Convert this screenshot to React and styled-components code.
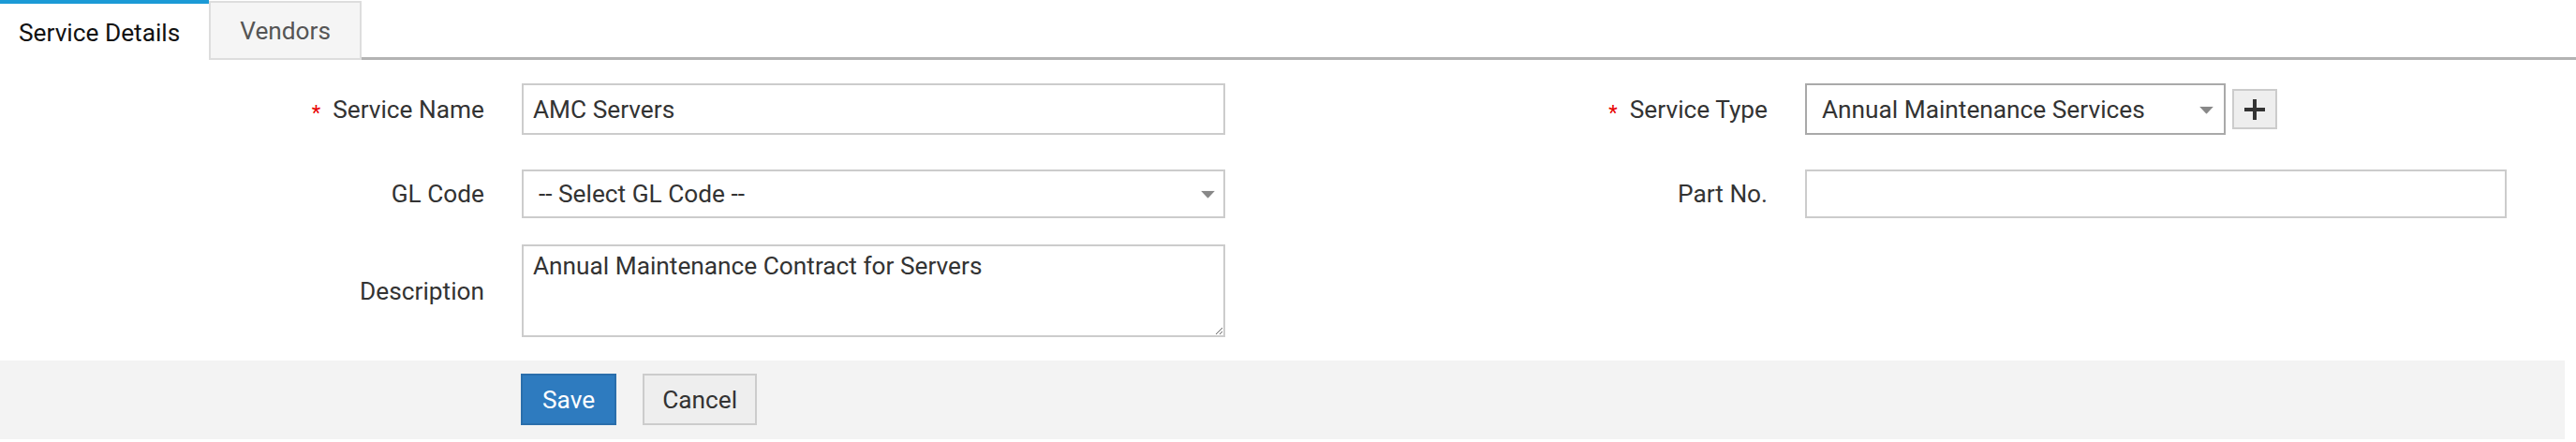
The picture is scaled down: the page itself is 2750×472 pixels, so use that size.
import React from 'react';
import styled, { createGlobalStyle } from 'styled-components';

const GlobalStyle = createGlobalStyle`
  body {
    margin: 0;
    background: #fff;
    font-family: Roboto, "Noto Sans", Arial, sans-serif;
  }
`;

const App = () => {
  return (
    <Page>
      <GlobalStyle />
      <TabBar>
        <Tab $active>Service Details</Tab>
        <Tab>Vendors</Tab>
      </TabBar>

      <Form>
        <FormRow $top={25}>
          <Label>
            <Required>*</Required>Service Name
          </Label>
          <TextInput $h={55} defaultValue="AMC Servers" />
          <Label>
            <Required>*</Required>Service Type
          </Label>
          <Control>
            <SelectWrap $w={449}>
              <Select $h={55} $dark defaultValue="ams">
                <option value="ams">Annual Maintenance Services</option>
              </Select>
              <Arrow />
            </SelectWrap>
            <AddButton type="button" title="Add">
              <svg width="24" height="24" viewBox="0 0 24 24">
                <path d="M12 1v22M1 12h22" stroke="#333" strokeWidth="4" fill="none" />
              </svg>
            </AddButton>
          </Control>
        </FormRow>

        <FormRow $top={37}>
          <Label>GL Code</Label>
          <SelectWrap>
            <Select $h={52} defaultValue="">
              <option value="">-- Select GL Code --</option>
            </Select>
            <Arrow $right={11} />
          </SelectWrap>
          <Label>Part No.</Label>
          <TextInput $h={52} defaultValue="" />
        </FormRow>

        <FormRow $top={28}>
          <Label>Description</Label>
          <TextArea defaultValue="Annual Maintenance Contract for Servers" />
        </FormRow>
      </Form>

      <Footer>
        <Button $primary $pad={21}>Save</Button>
        <Button $pad={19}>Cancel</Button>
      </Footer>
    </Page>
  );
};

const Arrow = ({ $right = 13 }) => (
  <ArrowIcon $right={$right} width="15" height="8" viewBox="0 0 15 8">
    <polygon points="0,0 15,0 7.5,8" fill="#888" />
  </ArrowIcon>
);

export default App;

const Page = styled.div`
  width: 2750px;
  color: #333;
`;

const TabBar = styled.div`
  display: flex;
  align-items: flex-start;
  height: 61px;
  border-bottom: 3px solid #b3b3b3;
`;

const Tab = styled.div`
  box-sizing: border-box;
  height: ${props => (props.$active ? '64px' : '63px')};
  margin-top: ${props => (props.$active ? '0' : '1px')};
  font-size: 26.25px;
  line-height: 30px;
  white-space: nowrap;
  cursor: pointer;
  background: ${props => (props.$active ? '#fff' : '#f5f5f5')};
  color: ${props => (props.$active ? '#111' : '#555')};
  border: ${props => (props.$active ? 'none' : '2px solid #ddd')};
  border-top: ${props => (props.$active ? '4px solid #1b9ad6' : '2px solid #ddd')};
  padding: ${props => (props.$active ? '16px 31px 14px 20px' : '15px 31px 12px 31px')};
`;

const Form = styled.div`
  padding-bottom: 25px;
`;

const FormRow = styled.div`
  display: grid;
  grid-template-columns: 517px 751px 539px 749px;
  column-gap: 40px;
  align-items: center;
  margin-top: ${props => props.$top}px;
`;

const Label = styled.label`
  display: flex;
  justify-content: flex-end;
  align-items: center;
  font-size: 26.25px;
  color: #333;
  white-space: nowrap;
`;

const Required = styled.span`
  color: #e80000;
  font-size: 22px;
  margin-right: 13px;
  transform: translateY(4px);
`;

const TextInput = styled.input`
  box-sizing: border-box;
  width: 100%;
  height: ${props => props.$h}px;
  border: 2px solid #ccc;
  padding: 0 10px;
  font: inherit;
  font-size: 26.25px;
  color: #333;
  outline: none;
`;

const Control = styled.div`
  display: flex;
  align-items: center;
  gap: 7px;
`;

const SelectWrap = styled.div`
  position: relative;
  width: ${props => (props.$w ? `${props.$w}px` : '100%')};
`;

const Select = styled.select`
  box-sizing: border-box;
  appearance: none;
  width: 100%;
  height: ${props => props.$h}px;
  border: 2px solid ${props => (props.$dark ? '#a9a9a9' : '#ccc')};
  border-radius: 0;
  background: #fff;
  padding: 0 40px 0 16px;
  font: inherit;
  font-size: 26.25px;
  color: #333;
  outline: none;
`;

const ArrowIcon = styled.svg`
  position: absolute;
  right: ${props => props.$right}px;
  top: 50%;
  transform: translateY(-40%);
  pointer-events: none;
`;

const AddButton = styled.button`
  box-sizing: border-box;
  width: 48px;
  height: 43px;
  display: flex;
  align-items: center;
  justify-content: center;
  padding: 0;
  background: #eee;
  border: 2px solid #ccc;
  cursor: pointer;
`;

const TextArea = styled.textarea`
  box-sizing: border-box;
  width: 100%;
  height: 99px;
  border: 2px solid #ccc;
  padding: 6px 10px;
  font: inherit;
  font-size: 26.25px;
  line-height: 30px;
  color: #333;
  resize: both;
  outline: none;
`;

const Footer = styled.div`
  display: flex;
  gap: 28px;
  margin-right: 12px;
  padding: 14px 0 15px 556px;
  background: #f3f3f3;
`;

const Button = styled.button`
  box-sizing: border-box;
  height: 55px;
  padding: 0 ${props => props.$pad}px;
  font: inherit;
  font-size: 26.25px;
  cursor: pointer;
  background: ${props => (props.$primary ? '#2e7bbf' : '#eee')};
  color: ${props => (props.$primary ? '#fff' : '#333')};
  border: 2px solid ${props => (props.$primary ? '#2a6eab' : '#ccc')};
`;
